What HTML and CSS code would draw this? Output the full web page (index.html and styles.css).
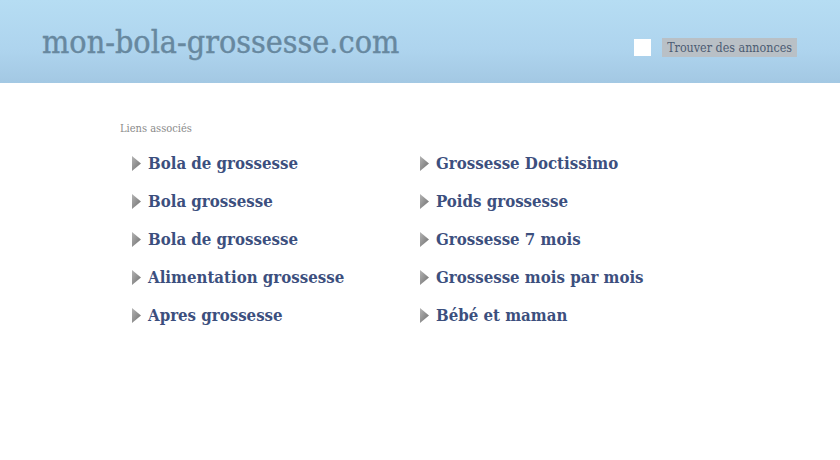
FILE: index.html
```html
<!DOCTYPE html>
<html lang="fr">
<head>
<meta charset="utf-8">
<title>mon-bola-grossesse.com</title>
<link rel="stylesheet" href="styles.css">
</head>
<body>
<svg class="defs" width="0" height="0" aria-hidden="true">
  <defs>
    <linearGradient id="ag" x1="0" y1="0" x2="1" y2="1">
      <stop offset="0" stop-color="#b4b4b4"/>
      <stop offset="1" stop-color="#6e6e6e"/>
    </linearGradient>
  </defs>
</svg>
<header class="top">
  <h1 class="site">mon-bola-grossesse.com</h1>
  <form class="search">
    <span class="box"></span>
    <span class="btn">Trouver des annonces</span>
  </form>
</header>
<main class="content">
  <div class="label">Liens associés</div>
  <ul class="links">
    <li><svg class="arrow" viewBox="0 0 9 15"><path d="M0 0 L9 7.5 L0 15 Z" fill="url(#ag)"/></svg><a href="#">Bola de grossesse</a></li>
    <li><svg class="arrow" viewBox="0 0 9 15"><path d="M0 0 L9 7.5 L0 15 Z" fill="url(#ag)"/></svg><a href="#">Grossesse Doctissimo</a></li>
    <li><svg class="arrow" viewBox="0 0 9 15"><path d="M0 0 L9 7.5 L0 15 Z" fill="url(#ag)"/></svg><a href="#">Bola grossesse</a></li>
    <li><svg class="arrow" viewBox="0 0 9 15"><path d="M0 0 L9 7.5 L0 15 Z" fill="url(#ag)"/></svg><a href="#">Poids grossesse</a></li>
    <li><svg class="arrow" viewBox="0 0 9 15"><path d="M0 0 L9 7.5 L0 15 Z" fill="url(#ag)"/></svg><a href="#">Bola de grossesse</a></li>
    <li><svg class="arrow" viewBox="0 0 9 15"><path d="M0 0 L9 7.5 L0 15 Z" fill="url(#ag)"/></svg><a href="#">Grossesse 7 mois</a></li>
    <li><svg class="arrow" viewBox="0 0 9 15"><path d="M0 0 L9 7.5 L0 15 Z" fill="url(#ag)"/></svg><a href="#">Alimentation grossesse</a></li>
    <li><svg class="arrow" viewBox="0 0 9 15"><path d="M0 0 L9 7.5 L0 15 Z" fill="url(#ag)"/></svg><a href="#">Grossesse mois par mois</a></li>
    <li><svg class="arrow" viewBox="0 0 9 15"><path d="M0 0 L9 7.5 L0 15 Z" fill="url(#ag)"/></svg><a href="#">Apres grossesse</a></li>
    <li><svg class="arrow" viewBox="0 0 9 15"><path d="M0 0 L9 7.5 L0 15 Z" fill="url(#ag)"/></svg><a href="#">Bébé et maman</a></li>
  </ul>
</main>
</body>
</html>
```

FILE: styles.css
```css
html, body {
  margin: 0;
  padding: 0;
  background: #ffffff;
}
body {
  font-family: "DejaVu Serif Condensed", "DejaVu Serif", serif;
  font-stretch: condensed;
  width: 840px;
  height: 460px;
  overflow: hidden;
}
.defs {
  position: absolute;
}
.top {
  height: 83px;
  background: linear-gradient(to bottom, #b6ddf3 0%, #aed4ee 60%, #a3c8e3 100%);
  display: flex;
  align-items: flex-start;
  justify-content: space-between;
  padding: 0 43px 0 42px;
  box-sizing: border-box;
}
.site {
  margin: 22px 0 0 0;
  font-size: 32px;
  font-weight: normal;
  color: #67889f;
  line-height: 40px;
  -webkit-text-stroke: 0.4px #67889f;
}
.search {
  margin: 38px 0 0 0;
  display: flex;
  align-items: center;
  gap: 11px;
}
.box {
  width: 17px;
  height: 17px;
  background: #ffffff;
  display: block;
}
.btn {
  display: block;
  background: #b9c0c6;
  color: #4b5b72;
  font-size: 12.4px;
  line-height: 19px;
  padding: 0 5px;
}
.content {
  padding: 39px 0 0 120px;
}
.label {
  font-size: 11px;
  color: #8a8a8a;
  line-height: 14px;
}
.links {
  list-style: none;
  margin: 16px 0 0 12px;
  padding: 0;
  display: grid;
  grid-template-columns: 288px 300px;
  row-gap: 16px;
}
.links li {
  display: flex;
  align-items: center;
  height: 22px;
}
.arrow {
  width: 9px;
  height: 15px;
  margin-right: 7px;
  flex: none;
}
.links a {
  font-size: 16.7px;
  font-weight: bold;
  color: #3c4f7e;
  text-decoration: none;
}
```
